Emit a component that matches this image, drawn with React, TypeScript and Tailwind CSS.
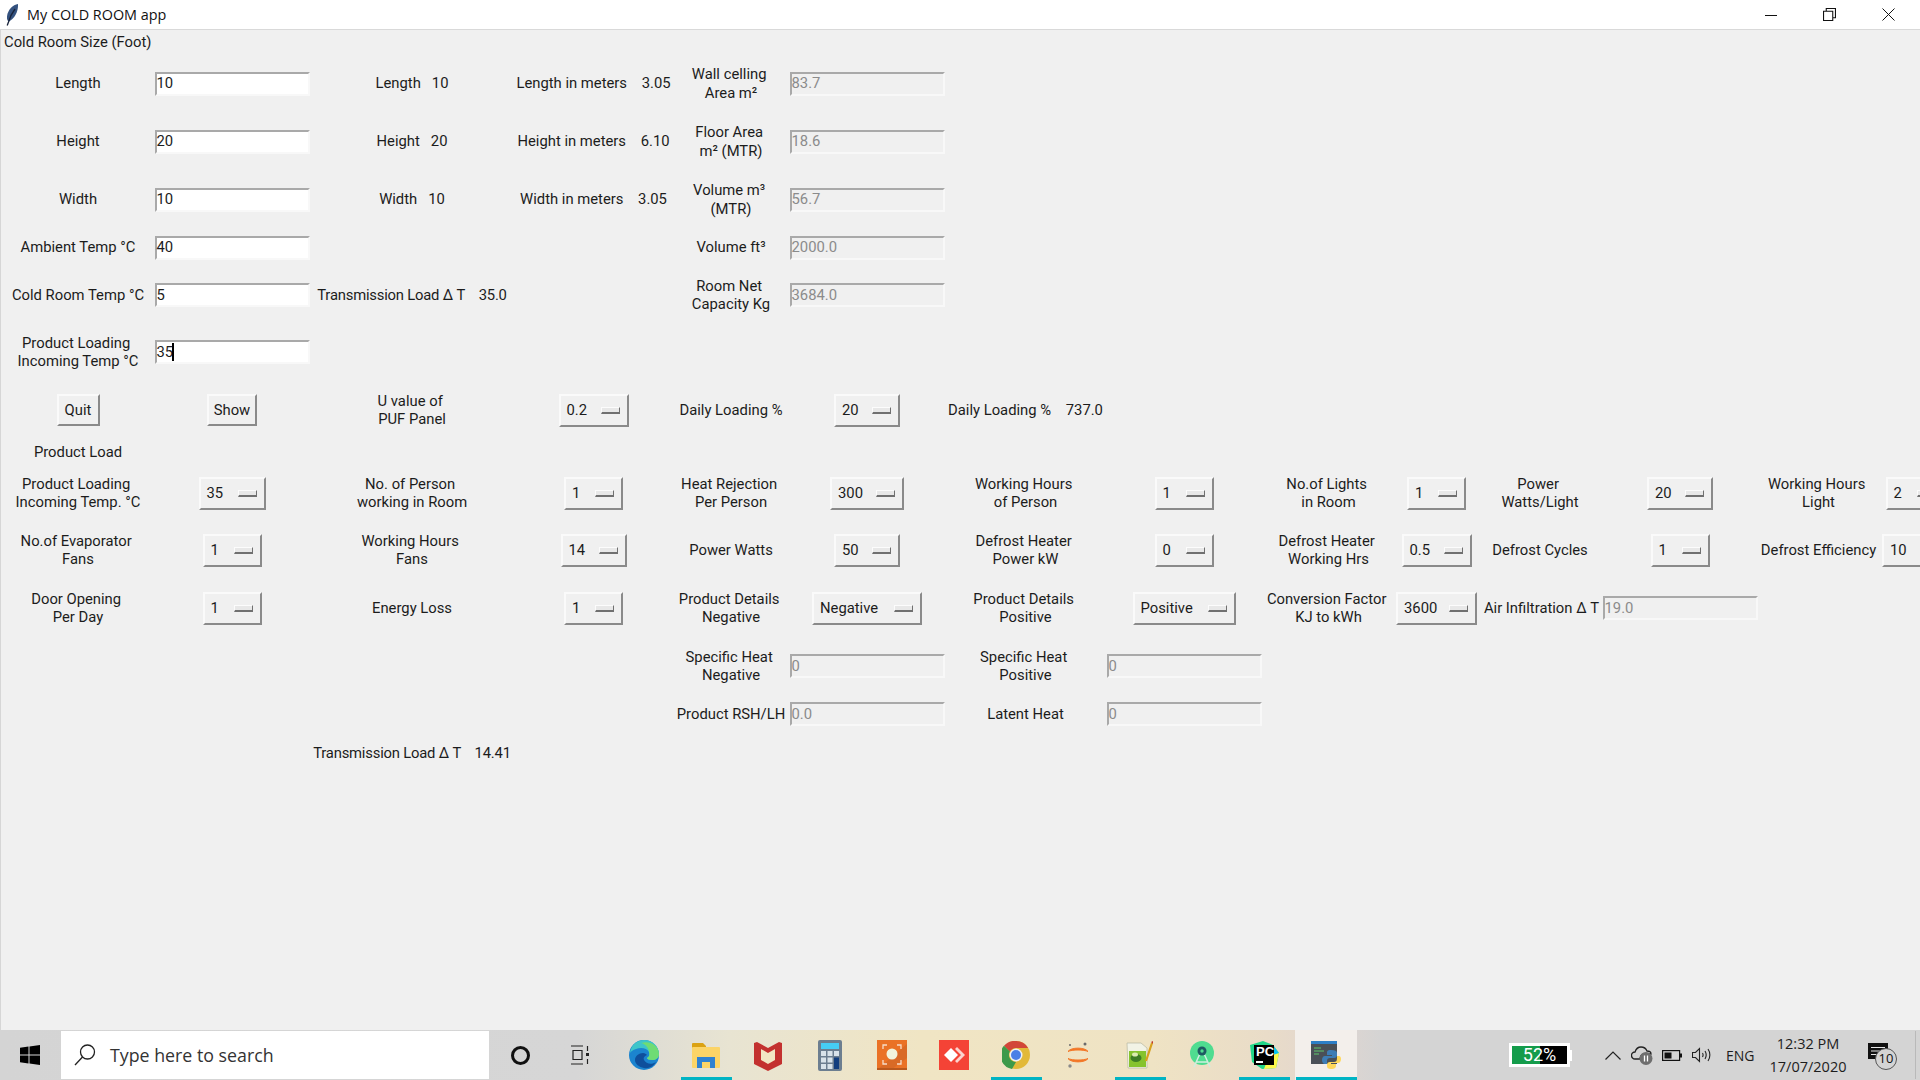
const tkFont = "font-['Roboto',sans-serif] text-[14.8px] leading-[18.5px] text-[#1c1c1c]";

function Label({ text, cell, className = "" }: { text: string; cell: string; className?: string }) {
  return <div className={`${cell} self-center justify-self-center whitespace-pre text-center ${className}`}>{text}</div>;
}

function Entry({ value, cell, disabled, caret }: { value: string; cell: string; disabled?: boolean; caret?: boolean }) {
  return (
    <div
      className={`${cell} self-center justify-self-center flex h-[24px] w-[155px] items-center border-2 border-t-[#a9a9a9] border-l-[#a9a9a9] border-r-[#f8f8f8] border-b-[#f8f8f8] ${
        disabled ? "bg-[#f0f0f0] text-[#8b8b8b]" : "bg-white"
      }`}
    >
      {value}
      {caret && <span className="ml-[-1px] h-[18px] w-[2px] bg-black" />}
    </div>
  );
}

function Menu({ value, cell, width }: { value: string; cell: string; width: string }) {
  return (
    <div
      className={`${cell} ${width} self-center justify-self-center flex h-[33px] items-center justify-between border-2 border-t-[#fafafa] border-l-[#fafafa] border-r-[#8a8a8a] border-b-[#8a8a8a] bg-[#f0f0f0] pl-[6px] pr-[7px]`}
    >
      <span>{value}</span>
      <span className="h-[7px] w-[19px] border border-b-2 border-t-[#fcfcfc] border-l-[#fcfcfc] border-r-[#707070] border-b-[#707070] bg-[#e8e8e8]" />
    </div>
  );
}

function TkButton({ text, cell, width }: { text: string; cell: string; width: string }) {
  return (
    <div
      className={`${cell} ${width} self-center justify-self-center flex h-[32px] items-center justify-center border-2 border-t-[#fafafa] border-l-[#fafafa] border-r-[#8a8a8a] border-b-[#8a8a8a] bg-[#f0f0f0]`}
    >
      {text}
    </div>
  );
}

function Slot({ children, running, active }: { children?: React.ReactNode; running?: boolean; active?: boolean }) {
  return (
    <div className={`relative flex h-full w-[62px] items-center justify-center ${active ? "bg-[#f3efeb]" : ""}`}>
      {children}
      {running && <div className={`absolute bottom-0 h-[3px] bg-[#00b4c4] ${active ? "w-[61px]" : "w-[51px]"}`} />}
    </div>
  );
}

function TitleBar() {
  return (
    <div className="flex h-[30px] shrink-0 items-center border-b border-[#d9d9d9] bg-white">
      <svg width="16" height="24" viewBox="0 0 16 24" className="ml-[4px] mr-[7px]">
        <path d="M14 1C9 1.500 3.500 7 3 13.500c-.2 3 .6 4.500 2 5C10 16 14.500 9 14 1z" fill="#34527f" />
        <path d="M11 6C8 10 5.500 15 4.500 19L3.200 22.500" stroke="#18233a" strokeWidth="1.300" fill="none" />
      </svg>
      <span className="font-['Open_Sans',sans-serif] text-[14.4px] text-[#111]">My COLD ROOM app</span>
      <div className="ml-auto flex h-full">
        <div className="flex w-[54px] items-center justify-center">
          <svg width="12" height="12" viewBox="0 0 12 12"><path d="M0 6.500h12" stroke="#111" /></svg>
        </div>
        <div className="flex w-[62px] items-center justify-center">
          <svg width="13" height="13" viewBox="0 0 12 12" fill="none" stroke="#111"><path d="M.5 3h8.500v8.500H.5zM3 3V.5h8.500V9H9" /></svg>
        </div>
        <div className="flex w-[60px] items-center justify-center pr-[4px]">
          <svg width="13" height="13" viewBox="0 0 13 13" stroke="#111"><path d="M.5.5l12 12M12.500.5l-12 12" /></svg>
        </div>
      </div>
    </div>
  );
}

function RoomForm() {
  return (
    <div
      className={`grid flex-1 grid-cols-[154px_154px_206px_157px_118px_154px_163px_154px_135px_81px_126px_154px_123px_70px] grid-rows-[25px_57px_59px_57px_39px_56px_58px_58px_26px_56px_58px_58px_58px_38px_40px] content-start overflow-hidden border-l border-[#d6d6d6] bg-[#f0f0f0] ${tkFont}`}
    >
      <div className="col-start-1 col-span-2 row-start-1 self-center pl-[3px]">Cold Room Size (Foot)</div>

      <Label cell="col-start-1 row-start-2" text="Length" />
      <Entry cell="col-start-2 row-start-2" value="10" />
      <Label cell="col-start-3 row-start-2" text="Length   10" />
      <Label cell="col-start-4 row-start-2" text="Length in meters    3.05" />
      <Label cell="col-start-5 row-start-2" text={"Wall celling \nArea m²"} />
      <Entry cell="col-start-6 row-start-2" value="83.7" disabled />

      <Label cell="col-start-1 row-start-3" text="Height" />
      <Entry cell="col-start-2 row-start-3" value="20" />
      <Label cell="col-start-3 row-start-3" text="Height   20" />
      <Label cell="col-start-4 row-start-3" text="Height in meters    6.10" />
      <Label cell="col-start-5 row-start-3" text={"Floor Area \nm² (MTR)"} />
      <Entry cell="col-start-6 row-start-3" value="18.6" disabled />

      <Label cell="col-start-1 row-start-4" text="Width" />
      <Entry cell="col-start-2 row-start-4" value="10" />
      <Label cell="col-start-3 row-start-4" text="Width   10" />
      <Label cell="col-start-4 row-start-4" text="Width in meters    3.05" />
      <Label cell="col-start-5 row-start-4" text={"Volume m³ \n(MTR)"} />
      <Entry cell="col-start-6 row-start-4" value="56.7" disabled />

      <Label cell="col-start-1 row-start-5" text="Ambient Temp °C" />
      <Entry cell="col-start-2 row-start-5" value="40" />
      <Label cell="col-start-5 row-start-5" text="Volume ft³" />
      <Entry cell="col-start-6 row-start-5" value="2000.0" disabled />

      <Label cell="col-start-1 row-start-6" text="Cold Room Temp °C" />
      <Entry cell="col-start-2 row-start-6" value="5" />
      <Label cell="col-start-3 row-start-6" className="tracking-[-0.2px]" text="Transmission Load Δ T    35.0" />
      <Label cell="col-start-5 row-start-6" text={"Room Net \nCapacity Kg"} />
      <Entry cell="col-start-6 row-start-6" value="3684.0" disabled />

      <Label cell="col-start-1 row-start-7" text={"Product Loading \nIncoming Temp °C"} />
      <Entry cell="col-start-2 row-start-7" value="35" caret />

      <TkButton cell="col-start-1 row-start-8" width="w-[43px]" text="Quit" />
      <TkButton cell="col-start-2 row-start-8" width="w-[50px]" text="Show" />
      <Label cell="col-start-3 row-start-8" text={"U value of \nPUF Panel"} />
      <Menu cell="col-start-4 row-start-8" width="w-[70px]" value="0.2" />
      <Label cell="col-start-5 row-start-8" text="Daily Loading %" />
      <Menu cell="col-start-6 row-start-8" width="w-[66px]" value="20" />
      <Label cell="col-start-7 row-start-8" text="Daily Loading %    737.0" />

      <Label cell="col-start-1 row-start-9" text="Product Load" />

      <Label cell="col-start-1 row-start-10" text={"Product Loading \nIncoming Temp. °C"} />
      <Menu cell="col-start-2 row-start-10" width="w-[67px]" value="35" />
      <Label cell="col-start-3 row-start-10" text={"No. of Person \nworking in Room"} />
      <Menu cell="col-start-4 row-start-10" width="w-[59px]" value="1" />
      <Label cell="col-start-5 row-start-10" text={"Heat Rejection \nPer Person"} />
      <Menu cell="col-start-6 row-start-10" width="w-[74px]" value="300" />
      <Label cell="col-start-7 row-start-10" text={"Working Hours \nof Person"} />
      <Menu cell="col-start-8 row-start-10" width="w-[59px]" value="1" />
      <Label cell="col-start-9 row-start-10" text={"No.of Lights \nin Room"} />
      <Menu cell="col-start-10 row-start-10" width="w-[59px]" value="1" />
      <Label cell="col-start-11 row-start-10" text={"Power \nWatts/Light"} />
      <Menu cell="col-start-12 row-start-10" width="w-[66px]" value="20" />
      <Label cell="col-start-13 row-start-10" text={"Working Hours \nLight"} />
      <Menu cell="col-start-14 row-start-10" width="w-[59px]" value="2" />

      <Label cell="col-start-1 row-start-11" text={"No.of Evaporator \nFans"} />
      <Menu cell="col-start-2 row-start-11" width="w-[59px]" value="1" />
      <Label cell="col-start-3 row-start-11" text={"Working Hours \nFans"} />
      <Menu cell="col-start-4 row-start-11" width="w-[66px]" value="14" />
      <Label cell="col-start-5 row-start-11" text="Power Watts" />
      <Menu cell="col-start-6 row-start-11" width="w-[66px]" value="50" />
      <Label cell="col-start-7 row-start-11" text={"Defrost Heater \nPower kW"} />
      <Menu cell="col-start-8 row-start-11" width="w-[59px]" value="0" />
      <Label cell="col-start-9 row-start-11" text={"Defrost Heater \nWorking Hrs"} />
      <Menu cell="col-start-10 row-start-11" width="w-[70px]" value="0.5" />
      <Label cell="col-start-11 row-start-11" text="Defrost Cycles" />
      <Menu cell="col-start-12 row-start-11" width="w-[59px]" value="1" />
      <Label cell="col-start-13 row-start-11" text="Defrost Efficiency" />
      <Menu cell="col-start-14 row-start-11" width="w-[66px]" value="10" />

      <Label cell="col-start-1 row-start-12" text={"Door Opening \nPer Day"} />
      <Menu cell="col-start-2 row-start-12" width="w-[59px]" value="1" />
      <Label cell="col-start-3 row-start-12" text="Energy Loss" />
      <Menu cell="col-start-4 row-start-12" width="w-[59px]" value="1" />
      <Label cell="col-start-5 row-start-12" text={"Product Details \nNegative"} />
      <Menu cell="col-start-6 row-start-12" width="w-[110px]" value="Negative" />
      <Label cell="col-start-7 row-start-12" text={"Product Details \nPositive"} />
      <Menu cell="col-start-8 row-start-12" width="w-[103px]" value="Positive" />
      <Label cell="col-start-9 row-start-12" text={"Conversion Factor \nKJ to kWh"} />
      <Menu cell="col-start-10 row-start-12" width="w-[81px]" value="3600" />
      <Label cell="col-start-11 row-start-12" className="pl-[3px]" text="Air Infiltration Δ T" />
      <Entry cell="col-start-12 row-start-12" value="19.0" disabled />

      <Label cell="col-start-5 row-start-13" text={"Specific Heat \nNegative"} />
      <Entry cell="col-start-6 row-start-13" value="0" disabled />
      <Label cell="col-start-7 row-start-13" text={"Specific Heat \nPositive"} />
      <Entry cell="col-start-8 row-start-13" value="0" disabled />

      <Label cell="col-start-5 row-start-14" text="Product RSH/LH" />
      <Entry cell="col-start-6 row-start-14" value="0.0" disabled />
      <Label cell="col-start-7 row-start-14" text="Latent Heat" />
      <Entry cell="col-start-8 row-start-14" value="0" disabled />

      <Label cell="col-start-3 row-start-15" className="tracking-[-0.2px]" text="Transmission Load Δ T    14.41" />
    </div>
  );
}

function AppIcons() {
  return (
    <>
      <Slot>
        <svg width="32" height="32" viewBox="0 0 32 32">
          <circle cx="16" cy="16" r="15" fill="#1b84cf" />
          <path d="M2 14C3 6 9 1 16 1c8 0 15 6 15 14 0 4-3 6-7 6-3 0-5-1-5-2 2-1 3-3 2-6-2-4-8-5-13-3-3 1-5 2-6 4z" fill="#3ec5c9" />
          <path d="M31 15c0 4-3 6-7 6-3 0-5-1-5-2 2-1 3-3 2-6 0-3-3-8-8-9 8-3 18 2 18 11z" fill="#6fdc74" />
          <path d="M7 21c0-4 4-7 8-7 2 0 3 1 4 2-3 1-4 3-3 5 2 4 8 5 12 2-3 5-8 7-12 6-5-1-9-4-9-8z" fill="#0f4f9c" />
        </svg>
      </Slot>
      <Slot running>
        <svg width="28" height="26" viewBox="0 0 28 26">
          <path d="M0 2a1 1 0 0 1 1-1h10l3 3v2H0z" fill="#dba213" />
          <rect y="5" width="28" height="21" rx="1" fill="#fbd467" />
          <path d="M5 26V15h18v11h-5v-6h-8v6z" fill="#2f82d1" />
        </svg>
      </Slot>
      <Slot>
        <svg width="28" height="31" viewBox="0 0 28 31">
          <path d="M0 3l3-1v0l11 6 11-6 3 1v21l-14 7-14-7z" fill="#c3312f" />
          <path d="M7 9l7 4 7-4v11l-7 4-7-4z" fill="#f2e6c4" />
        </svg>
      </Slot>
      <Slot>
        <svg width="24" height="31" viewBox="0 0 24 31">
          <rect width="24" height="31" rx="2" fill="#6c7e90" />
          <rect x="3" y="3" width="18" height="6" fill="#45cdf5" />
          <path d="M3 11h5v5H3zM9.500 11h5v5h-5zM16 11h5v5h-5zM3 17.500h5v5H3zM9.500 17.500h5v5h-5zM3 24h5v5H3zM9.500 24h5v5h-5z" fill="#d9e3ea" />
          <rect x="16" y="17.500" width="5" height="11.500" fill="#123e7e" />
        </svg>
      </Slot>
      <Slot>
        <svg width="30" height="30" viewBox="0 0 30 30">
          <rect width="30" height="30" fill="#ea7226" />
          <path d="M0 30L30 4v14L14 30z" fill="#d96a26" />
          <rect y="28" width="30" height="2" fill="#b9581d" />
          <circle cx="15" cy="14" r="5.500" fill="#f2f4dc" />
          <path d="M6 9V5h4M20 5h4v4M24 20v4h-4M10 24H6v-4" stroke="#f6dcc8" strokeWidth="1.300" fill="none" />
        </svg>
      </Slot>
      <Slot>
        <svg width="30" height="30" viewBox="0 0 30 30">
          <rect width="30" height="30" fill="#f44336" />
          <path d="M12 8l7 7-7 7-7-7z" fill="#fff" />
          <path d="M18 7l8 8-8 8-2-2 6-6-6-6z" fill="#fbd3ce" />
        </svg>
      </Slot>
      <Slot running>
        <svg width="28" height="28" viewBox="0 0 28 28">
          <circle cx="14" cy="14" r="14" fill="#e2b93a" />
          <path d="M14 0a14 14 0 0 1 12.100 7H14a7 7 0 0 0-6.100 3.500L2 4.800A14 14 0 0 1 14 0z" fill="#d2473a" />
          <path d="M2 4.800l5.900 5.700a7 7 0 0 0 6.100 10.500L10 28A14 14 0 0 1 2 4.800z" fill="#3d9a4a" />
          <circle cx="14" cy="14" r="6.500" fill="#eef1f6" />
          <circle cx="14" cy="14" r="5" fill="#4a80e6" />
        </svg>
      </Slot>
      <Slot>
        <svg width="24" height="28" viewBox="0 0 24 28" fill="none">
          <path d="M2 10.500C5 6 19 6 22 10.500c-4-2-16-2-20 0zM2 17.500C5 22 19 22 22 17.500c-4 2-16 2-20 0z" fill="#f37726" stroke="#f37726" />
          <circle cx="19" cy="3" r="1.500" fill="#6b6b6b" />
          <circle cx="4" cy="4" r="1" fill="#6b6b6b" />
          <circle cx="4" cy="25" r="1.700" fill="#8a8a8a" />
        </svg>
      </Slot>
      <Slot running>
        <svg width="30" height="30" viewBox="0 0 30 30">
          <path d="M2 3h14l6 5v20H3z" fill="#f2f3e6" stroke="#b6b6a0" strokeWidth="0.700" />
          <path d="M4 11h17v16H4z" fill="#86c32e" />
          <ellipse cx="11" cy="18" rx="5.500" ry="4" fill="#3f7d25" />
          <ellipse cx="10" cy="14.500" rx="3" ry="2" fill="#dcebb0" />
          <path d="M21 21L27 3" stroke="#d8a11e" strokeWidth="2.200" />
          <path d="M26 2l2-1v3z" fill="#c0392b" />
        </svg>
      </Slot>
      <Slot>
        <svg width="26" height="28" viewBox="0 0 26 28">
          <circle cx="13" cy="12" r="12" fill="#4fdc90" />
          <path d="M13 8L5 26M13 8l8 18M7 21h12" stroke="#cfeee0" strokeWidth="1.500" fill="none" />
          <circle cx="13" cy="10" r="4.500" fill="#1e5a63" />
          <circle cx="13" cy="10" r="1.700" fill="#4fdc90" />
        </svg>
      </Slot>
      <Slot running>
        <div className="relative h-[30px] w-[30px]">
          <svg width="30" height="30" viewBox="0 0 30 30" className="absolute inset-0">
            <path d="M1 5l13-4 10 4 6 8-3 15-14 1-10-7z" fill="#21d789" />
            <path d="M24 5l6 8-3 15-12 1z" fill="#fcf84a" />
            <path d="M24 5l6 8-6 2z" fill="#07c3f2" />
          </svg>
          <div className="absolute left-[5px] top-[5px] h-[20px] w-[20px] bg-black pl-[2px] font-['Liberation_Sans',sans-serif] text-[13px] leading-[14px] font-bold text-white">
            PC
            <div className="absolute bottom-[2px] left-[2px] h-[2px] w-[7px] bg-white" />
          </div>
        </div>
      </Slot>
      <Slot running active>
        <svg width="30" height="30" viewBox="0 0 30 30">
          <rect x="0" y="1" width="26" height="23" fill="#4a5057" />
          <rect x="0" y="1" width="26" height="3" fill="#2d7fc7" />
          <path d="M3 8h7M3 11h10M3 14h5" stroke="#5fc96d" strokeWidth="1" />
          <path d="M20 10c-4 0-4 1.500-4 3v2h5v1h-7c-2 0-3 2-3 4s1 4 3 4h2v-3c0-2 1-3 3-3h4c2 0 3-1 3-3v-2c0-2-2-3-6-3z" fill="#3d7db5" />
          <path d="M20 29c4 0 5-1.500 5-3v-2h-5v-1h7c2 0 3-2 3-4s-1-3-2-3h-2v2c0 3-1 4-3 4h-4c-2 0-3 1-3 3v1c0 2 1 3 4 3z" fill="#ffd85a" />
        </svg>
      </Slot>
    </>
  );
}

function Tray() {
  return (
    <div className="ml-auto flex h-full items-center font-['Open_Sans',sans-serif] text-[#1d1d1d]">
      <div className="flex h-[24px] w-[61px] items-center border-[3px] border-white bg-[linear-gradient(90deg,#149c4b_50%,#000_50%)] text-center font-['Roboto',sans-serif] text-[18px] text-white">
        <span className="w-full leading-none">52%</span>
      </div>
      <div className="mr-[33px] h-[11px] w-[2px] bg-white" />
      <svg width="16" height="9" viewBox="0 0 16 9" fill="none" stroke="#222" strokeWidth="1.200" className="mr-[10px]">
        <path d="M.5 8.500L8 1l7.500 7.500" />
      </svg>
      <svg width="22" height="20" viewBox="0 0 22 20" className="mr-[9px]">
        <path d="M4 14a3.500 3.500 0 0 1 0-7c1-3 3-5 6-5 3 0 5 1.500 6 4 2 0 4 1 4 3H13c-3 0-4 3-4 5z" fill="none" stroke="#222" strokeWidth="1.300" />
        <circle cx="15" cy="13.500" r="6.500" fill="#6e6e6e" />
        <path d="M13.500 10.500v6M16.500 10.500v6" stroke="#fff" strokeWidth="1.300" />
      </svg>
      <svg width="20" height="11" viewBox="0 0 20 11" className="mr-[10px]">
        <rect x=".6" y=".6" width="17" height="9.800" fill="none" stroke="#111" strokeWidth="1.200" />
        <rect x="2.500" y="2.500" width="7" height="6" fill="#111" />
        <rect x="18" y="3.500" width="2" height="4" fill="#111" />
      </svg>
      <svg width="20" height="16" viewBox="0 0 20 16" fill="none" stroke="#222" strokeWidth="1.100" className="mr-[14px]">
        <path d="M.5 5.500h3l4-4v13l-4-4h-3zM10.500 6c.7 1.200.7 2.800 0 4M13 4c1.500 2.500 1.500 5.500 0 8M16 2c2.500 3.500 2.500 8.500 0 12" />
      </svg>
      <span className="mr-[12px] w-[30px] text-[14px]">ENG</span>
      <div className="flex w-[80px] flex-col items-center text-[14.5px] leading-[23px]">
        <span>12:32 PM</span>
        <span>17/07/2020</span>
      </div>
      <div className="relative ml-[20px] mr-[23px] h-[30px] w-[29px]">
        <svg width="20" height="18" viewBox="0 0 20 18" className="absolute left-0 top-[3px]">
          <path d="M0 0h20v16H0z" fill="#111" />
          <path d="M3 4.500h14M3 8h14M3 11.500h14" stroke="#e6e6e6" strokeWidth="1" />
        </svg>
        <div className="absolute bottom-0 right-0 flex h-[22px] w-[22px] items-center justify-center rounded-full border border-[#555] bg-[#d4d4d4] text-[13px] text-[#111]">
          10
        </div>
      </div>
    </div>
  );
}

function Taskbar() {
  return (
    <div className="relative flex h-[50px] shrink-0 items-center bg-[linear-gradient(90deg,#d4d4d4_0%,#d6d6d6_30%,#e8e4d2_38%,#f0e5c4_48%,#efe3c4_60%,#e9dcc8_66%,#e2d6cf_69%,#d4d4d4_72%,#d4d4d4_100%)]">
      <div className="flex h-full w-[61px] items-center justify-center pr-[2px]">
        <svg width="20" height="20" viewBox="0 0 20 20" fill="#000">
          <path d="M0 2.800L8.500 1.600v8H0zM9.500 1.500L20 0v9.600H9.500zM0 10.500h8.500v8L0 17.300zM9.500 10.500H20V20L9.500 18.600z" />
        </svg>
      </div>
      <div className="flex h-[48px] w-[428px] items-center bg-white pl-[13px] font-['Open_Sans',sans-serif] text-[17.8px] text-[#333]">
        <svg width="22" height="22" viewBox="0 0 22 22" fill="none" stroke="#222" strokeWidth="1.300" className="mr-[14px]">
          <circle cx="13.500" cy="8" r="7" />
          <path d="M8.500 13L1 21" />
        </svg>
        Type here to search
      </div>
      <Slot>
        <div className="h-[19px] w-[19px] rounded-full border-[3px] border-[#111]" />
      </Slot>
      <Slot>
        <svg width="20" height="20" viewBox="0 0 20 20" fill="none" stroke="#222" strokeWidth="1.200" className="mr-[4px]">
          <path d="M1 1h12M1 19h12M3 5.500h9v9H3zM17.500 1v5M17.500 14v5" />
          <rect x="16" y="8" width="3" height="3" fill="#222" stroke="none" />
        </svg>
      </Slot>
      <AppIcons />
      <Tray />
      <div className="absolute right-[4px] top-[1px] h-[48px] w-px bg-[#b9b9b9]" />
    </div>
  );
}

export default function App() {
  return (
    <div className="flex h-[1080px] w-[1920px] flex-col overflow-hidden bg-[#f0f0f0]">
      <TitleBar />
      <RoomForm />
      <Taskbar />
    </div>
  );
}
